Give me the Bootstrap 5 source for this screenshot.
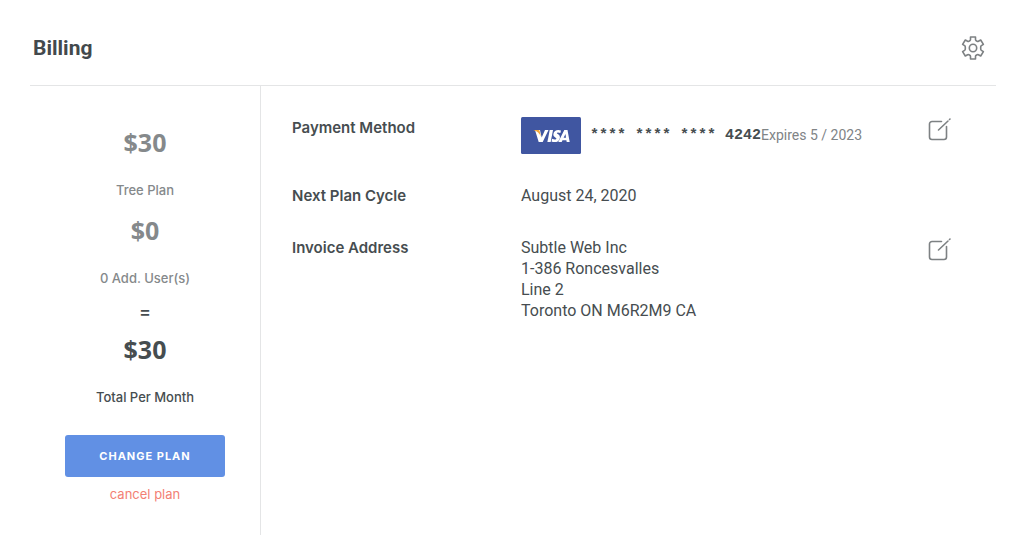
<!DOCTYPE html>
<html lang="en">
<head>
<meta charset="utf-8">
<meta name="viewport" content="width=device-width, initial-scale=1">
<title>Billing</title>
<link href="https://cdn.jsdelivr.net/npm/bootstrap@5.3.0/dist/css/bootstrap.min.css" rel="stylesheet">
<style>
  body { font-family: Inter, "Liberation Sans", sans-serif; font-size: 15px; line-height: 21px; color: #464d50; background: #fff; }
  .billing { padding: 0 28px 0 30px; }
  .billing-head { height: 86px; padding: 10px 11px 0 3px; border-bottom: 1px solid #e4e5e6; }
  .billing-title { font-family: Roboto, sans-serif; font-size: 21px; line-height: 24px; font-weight: 700; color: #43494c; }
  .icon-btn { color: #7d8183; line-height: 0; }
  .icon-btn svg { fill: none; stroke: currentColor; }
  .plan { width: 231px; border-right: 1px solid #e4e5e6; padding-top: 40px; font-size: 13px; line-height: 20px; font-weight: 500; }
  .price { font-family: "Noto Sans", sans-serif; font-size: 25px; line-height: 32px; font-weight: 700; margin-bottom: 22px; }
  .faded { color: #85898b; }
  .caption-line { margin-bottom: 14px; }
  .equals { font-size: 18px; margin-bottom: 11px; }
  .btn-plan { width: 160px; height: 42px; margin: 28px 0 7px; font-size: 11px; font-weight: 700; letter-spacing: 1px; border-radius: 3px; color: #fff; background: #6190e4; }
  .btn-plan:hover { color: #fff; background: #4f80d8; }
  .cancel { color: #f37f74; font-weight: 400; }
  .details { padding: 31px 44px 0 31px; font-family: Roboto, sans-serif; font-size: 16px; }
  .entry-label { width: 229px; font-family: Inter, sans-serif; font-size: 15px; font-weight: 600; }
  .payment-entry { min-height: 68px; }
  .cycle-entry { margin-bottom: 31px; }
  .visa { width: 60px; height: 37px; margin-right: 9px; }
  .digits { font-family: "Liberation Mono", monospace; font-size: 15px; font-weight: 700; white-space: pre; }
  .expires { font-size: 14px; color: #808486; }
</style>
</head>
<body>
<main class="billing d-flex flex-column min-vh-100">
  <header class="billing-head d-flex align-items-center justify-content-between flex-shrink-0">
    <h1 class="billing-title m-0">Billing</h1>
    <button type="button" class="icon-btn btn p-0 border-0" aria-label="Settings">
      <svg width="24" height="24" viewBox="0 0 24 24" stroke-width="1.6" stroke-linejoin="round"><path d="M9.500 1h5v2.500q0 .8.700 1.200l1 .6q.6.300 1.200 0l2.300-1.300 2.700 4.400-2 1.300q-.7.500-.7 1.300v2q0 .8.700 1.300l2 1.300-2.700 4.400-2.300-1.300q-.6-.3-1.200 0l-1 .6q-.7.400-.7 1.200V23h-5v-2.500q0-.8-.7-1.200l-1-.6q-.6-.3-1.200 0L4.300 20l-2.700-4.400 2-1.300q.7-.5.700-1.300v-2q0-.8-.7-1.300l-2-1.300L4.300 4l2.300 1.300q.6.300 1.200 0l1-.6q.7-.4.700-1.200z"/><circle cx="12" cy="12" r="3.700"/></svg>
    </button>
  </header>
  <div class="d-flex flex-grow-1">
    <aside class="plan text-center flex-shrink-0">
      <div class="price faded">$30</div>
      <div class="caption-line faded">Tree Plan</div>
      <div class="price faded">$0</div>
      <div class="caption-line faded">0 Add. User(s)</div>
      <div class="equals">=</div>
      <div class="price">$30</div>
      <div>Total Per Month</div>
      <button type="button" class="btn btn-plan border-0">CHANGE PLAN</button>
      <div><a href="#" class="cancel text-decoration-none">cancel plan</a></div>
    </aside>
    <section class="details flex-grow-1">
      <div class="payment-entry d-flex">
        <div class="entry-label flex-shrink-0">Payment Method</div>
        <div class="d-flex flex-grow-1 align-items-start">
          <div class="d-flex align-items-center">
            <svg class="visa flex-shrink-0" viewBox="0 0 60 37" role="img" aria-label="Visa"><rect width="60" height="37" rx="1.500" fill="#4056a1"/><g fill="#fff"><path d="M14 13h5l1.700 7.500L24 13h3.500l-5.800 12h-4z"/><path d="M28.700 13H32l-2.300 12h-3.300z"/><path d="M40 13.500l-.6 2.600c-1.700-.8-3.500-.8-3.600 0-.1 1 3.600 1.500 3.100 4.800-.5 3.900-4.900 4.900-8.400 3.600l.6-2.700c2 .9 4.200.9 4.300-.1.100-1.200-3.500-1.500-3-4.700.4-3.700 4.400-5 7.600-3.500z"/><path fill-rule="evenodd" d="M43.300 13h3.200L48.700 25h-3l-.3-1.800h-3.900l-.8 1.800h-3.400zM44.500 17l-1.900 3.800h2.400z"/></g><path d="M12.200 13h4.900c1 0 1.500.5 1.700 1.400l1.100 5.200c-1.200-3.100-3.700-5.500-7.700-6.600z" fill="#f3a83b"/></svg>
            <span class="digits">**** **** **** 4242</span><span class="expires">Expires 5 / 2023</span>
          </div>
        </div>
        <button type="button" class="icon-btn btn p-0 border-0 align-self-start" aria-label="Edit payment method">
          <svg width="24" height="24" viewBox="0 0 24 24" stroke-width="1.600" stroke-linecap="round"><path d="M13.500 4.500H4A2.500 2.500 0 0 0 1.500 7v13A2.500 2.500 0 0 0 4 22.500h12a2.500 2.500 0 0 0 2.500-2.500V9.500M10.500 13L20 4M21.500 2.500l.5-.5"/></svg>
        </button>
      </div>
      <div class="cycle-entry d-flex">
        <div class="entry-label flex-shrink-0">Next Plan Cycle</div>
        <div>August 24, 2020</div>
      </div>
      <div class="d-flex">
        <div class="entry-label flex-shrink-0">Invoice Address</div>
        <address class="flex-grow-1 mb-0">Subtle Web Inc<br>1-386 Roncesvalles<br>Line 2<br>Toronto ON M6R2M9 CA</address>
        <button type="button" class="icon-btn btn p-0 border-0 align-self-start" aria-label="Edit invoice address">
          <svg width="24" height="24" viewBox="0 0 24 24" stroke-width="1.600" stroke-linecap="round"><path d="M13.500 4.500H4A2.500 2.500 0 0 0 1.500 7v13A2.500 2.500 0 0 0 4 22.500h12a2.500 2.500 0 0 0 2.500-2.500V9.500M10.500 13L20 4M21.500 2.500l.5-.5"/></svg>
        </button>
      </div>
    </section>
  </div>
</main>
<script src="https://cdn.jsdelivr.net/npm/bootstrap@5.3.0/dist/js/bootstrap.bundle.min.js"></script>
</body>
</html>
